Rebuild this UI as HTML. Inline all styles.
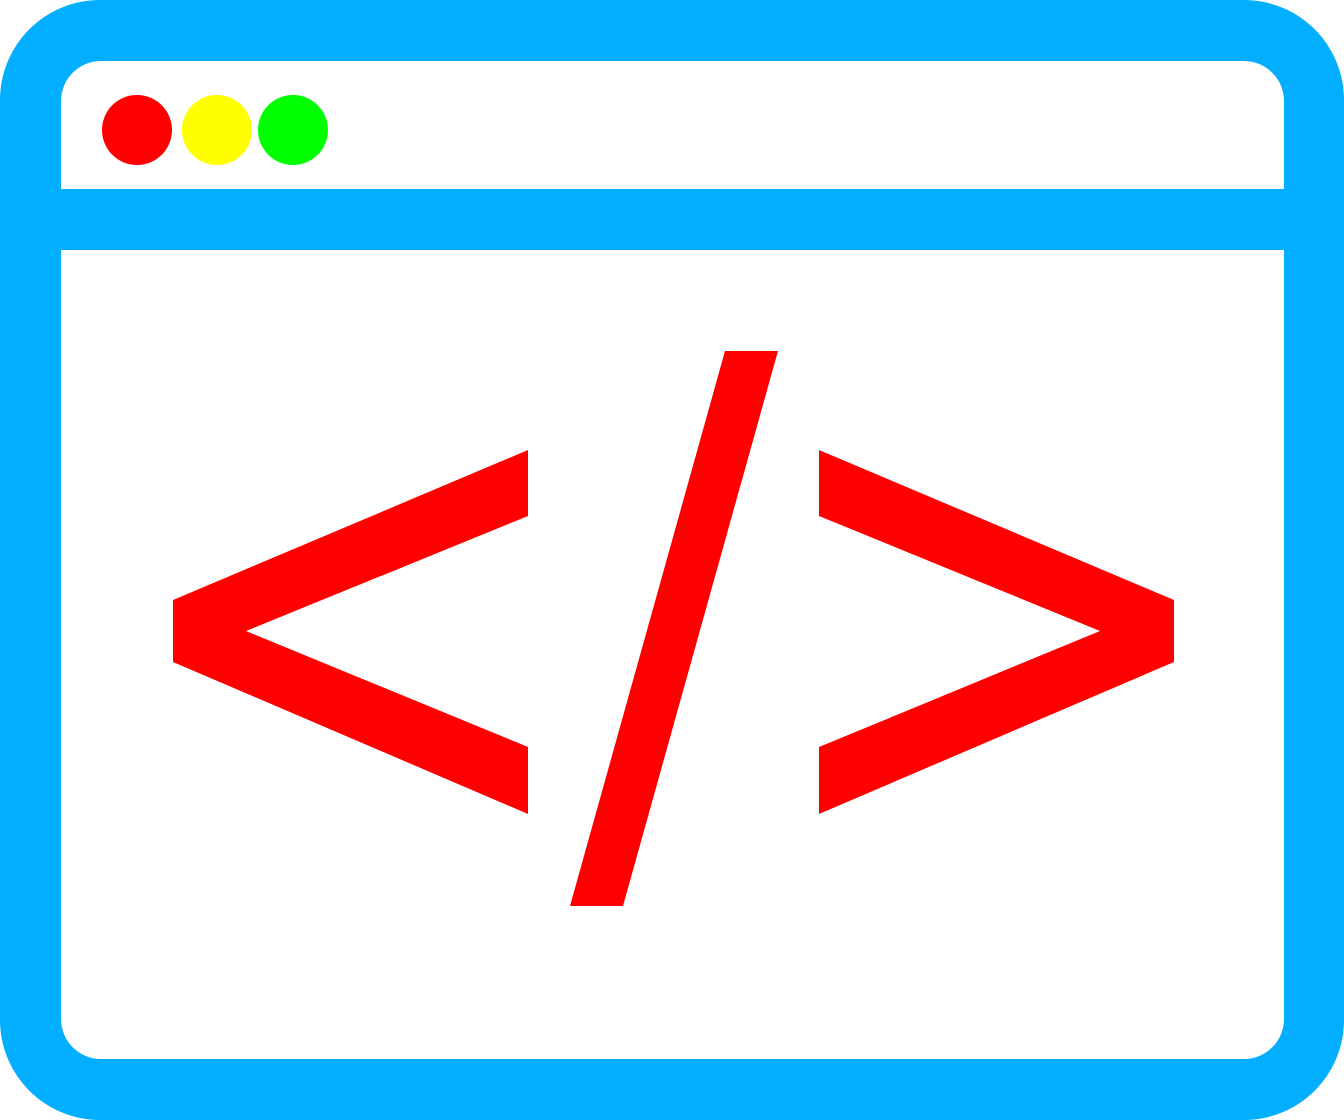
<!DOCTYPE html>
<html><head><meta charset="utf-8"><style>html,body{margin:0;padding:0;background:#fff}svg{display:block}</style></head>
<body>
<svg width="1344" height="1120" viewBox="0 0 1344 1120" xmlns="http://www.w3.org/2000/svg">
<rect x="0" y="0" width="1344" height="1120" rx="100" ry="100" fill="#02AEFF"/>
<rect x="61" y="61" width="1223" height="998" rx="40" ry="40" fill="#fff"/>
<rect x="61" y="189" width="1223" height="61" fill="#02AEFF"/>
<circle cx="137" cy="130" r="35" fill="#FF0000"/>
<circle cx="217" cy="130" r="35" fill="#FFFF00"/>
<circle cx="293" cy="130" r="35" fill="#00FF00"/>
<polygon fill="#FF0000" points="528,450 173,600 173,662 528,814 528,747 246,631 528,516"/>
<polygon fill="#FF0000" points="725,351 778,351 623,906 570,906"/>
<polygon fill="#FF0000" points="819,450 1174,600 1174,662 819,814 819,747 1100,631 819,516"/>
</svg>
</body></html>
